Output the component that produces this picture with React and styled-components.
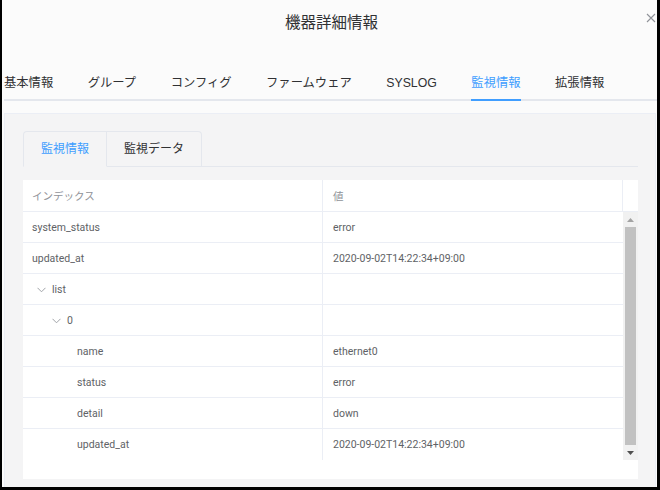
import React from 'react'
import styled, {createGlobalStyle} from 'styled-components'

const GlobalStyle = createGlobalStyle`
  html, body {
    margin: 0;
    padding: 0;
    background: #000;
  }
  body {
    font-family: Roboto, "Noto Sans CJK JP", sans-serif;
  }
  * {
    box-sizing: border-box;
  }
`

const tabs = ['基本情報', 'グループ', 'コンフィグ', 'ファームウェア', 'SYSLOG', '監視情報', '拡張情報']

const rows = [
    {key: 'system_status', value: 'error', indent: 9},
    {key: 'updated_at', value: '2020-09-02T14:22:34+09:00', indent: 9},
    {key: 'list', value: '', indent: 14, expand: true},
    {key: '0', value: '', indent: 29, expand: true},
    {key: 'name', value: 'ethernet0', indent: 54},
    {key: 'status', value: 'error', indent: 54},
    {key: 'detail', value: 'down', indent: 54},
    {key: 'updated_at', value: '2020-09-02T14:22:34+09:00', indent: 54},
]

export default function App() {
    return (
        <>
            <GlobalStyle/>
            <Modal>
                <Header>
                    <span/>
                    <Title>機器詳細情報</Title>
                    <Close>
                        <svg width="10" height="10" viewBox="0 0 10 10">
                            <path d="M1 1 L9 9 M9 1 L1 9" stroke="#909399" strokeWidth="1.1"/>
                        </svg>
                    </Close>
                </Header>
                <TabNav>
                    {tabs.map(t => (
                        <TabItem key={t} active={t === '監視情報'}>{t}</TabItem>
                    ))}
                </TabNav>
                <Panel>
                    <CardTabs>
                        <CardTab active>監視情報</CardTab>
                        <CardTab>監視データ</CardTab>
                    </CardTabs>
                    <Table>
                        <HeadRow>
                            <HeadCell>インデックス</HeadCell>
                            <HeadCell>値</HeadCell>
                            <Gutter/>
                        </HeadRow>
                        <Body>
                            <Rows>
                                {rows.map((r, i) => (
                                    <Row key={i} last={i === rows.length - 1}>
                                        <KeyCell style={{paddingLeft: r.indent}}>
                                            {r.expand && (
                                                <Chevron width="9" height="6" viewBox="0 0 9 6">
                                                    <path d="M0.5 0.8 L4.5 4.8 L8.5 0.8" fill="none" stroke="#a0a3a8" strokeWidth="1"/>
                                                </Chevron>
                                            )}
                                            {r.key}
                                        </KeyCell>
                                        <ValueCell>{r.value}</ValueCell>
                                    </Row>
                                ))}
                            </Rows>
                            <ScrollTrack>
                                <Arrow>
                                    <svg width="7" height="4" viewBox="0 0 7 4"><path d="M0 4 L3.5 0 L7 4 Z" fill="#a3a3a3"/></svg>
                                </Arrow>
                                <Thumb/>
                                <Arrow>
                                    <svg width="7" height="4" viewBox="0 0 7 4"><path d="M0 0 L3.5 4 L7 0 Z" fill="#505050"/></svg>
                                </Arrow>
                            </ScrollTrack>
                        </Body>
                        <TableFoot/>
                    </Table>
                </Panel>
            </Modal>
        </>
    )
}

const Modal = styled.div`
    width: 655px;
    height: 487px;
    margin-left: 2px;
    background-color: #fbfbfb;
    display: flex;
    flex-direction: column;
    padding-left: 2px;
    overflow: hidden;
`
const Header = styled.div`
    display: grid;
    grid-template-columns: 1fr auto 1fr;
    align-items: center;
    padding-top: 11px;
    height: 67px;
    align-content: start;
`
const Title = styled.div`
    font-size: 15.5px;
    line-height: 20px;
    color: #303133;
    font-family: "Noto Sans CJK JP", sans-serif;
    padding-left: 2px;
`
const Close = styled.div`
    justify-self: end;
    padding-right: 1px;
    margin-top: -6px;
    display: flex;
`
const TabNav = styled.div`
    display: flex;
    gap: 34.5px;
    box-shadow: inset 0 -2px 0 #e4e7ed;
`
const TabItem = styled.div`
    height: 34px;
    line-height: 32px;
    font-size: 12.3px;
    font-family: "Liberation Sans", "Noto Sans CJK JP", sans-serif;
    color: ${p => p.active ? '#409eff' : '#303133'};
    border-bottom: 2px solid ${p => p.active ? '#409eff' : 'transparent'};
    white-space: nowrap;
`
const Panel = styled.div`
    flex: 1;
    margin-top: 12px;
    margin-right: 1px;
    background-color: #f4f4f5;
    border: 1px solid #ebeef5;
    border-bottom: none;
    padding: 17px 17px 0 18px;
    display: flex;
    flex-direction: column;
`
const CardTabs = styled.div`
    display: flex;
    height: 36px;
    border-bottom: 1px solid #e4e7ed;
    margin-bottom: 13px;
`
const CardTab = styled.div`
    height: 36px;
    padding: 0 17px;
    line-height: 35px;
    font-size: 12px;
    white-space: nowrap;
    color: ${p => p.active ? '#409eff' : '#303133'};
    border: 1px solid #e4e7ed;
    border-bottom: 1px solid ${p => p.active ? '#f4f4f5' : '#e4e7ed'};
    border-left: ${p => p.active ? '1px solid #e4e7ed' : 'none'};
    border-radius: ${p => p.active ? '4px 0 0 0' : '0 4px 0 0'};
    background-color: #f4f4f5;
`
const Table = styled.div`
    background-color: #fff;
    width: 615px;
    display: flex;
    flex-direction: column;
`
const HeadRow = styled.div`
    display: grid;
    grid-template-columns: 300px 300px 15px;
    height: 32px;
    border-bottom: 1px solid #ebeef5;
`
const HeadCell = styled.div`
    font-size: 10.5px;
    color: #909399;
    padding-left: 9px;
    display: flex;
    align-items: center;
    border-right: 1px solid #ebeef5;
    &:nth-child(2) {
        padding-left: 10px;
    }
`
const Gutter = styled.div``
const Body = styled.div`
    display: flex;
    height: 248px;
`
const Rows = styled.div`
    width: 600px;
    display: flex;
    flex-direction: column;
`
const Row = styled.div`
    display: grid;
    grid-template-columns: 300px 300px;
    height: 31px;
    flex-shrink: 0;
    border-bottom: ${p => p.last ? 'none' : '1px solid #ebeef5'};
`
const KeyCell = styled.div`
    font-size: 10.5px;
    color: #606266;
    display: flex;
    align-items: center;
    border-right: 1px solid #ebeef5;
`
const ValueCell = styled.div`
    font-size: 10.5px;
    color: #606266;
    display: flex;
    align-items: center;
    padding-left: 10px;
`
const Chevron = styled.svg`
    margin-right: 6px;
    margin-top: 1px;
`
const ScrollTrack = styled.div`
    width: 15px;
    background-color: #f1f1f1;
    display: flex;
    flex-direction: column;
    align-items: center;
`
const Arrow = styled.div`
    height: 15px;
    display: flex;
    align-items: center;
    justify-content: center;
`
const Thumb = styled.div`
    flex: 1;
    width: 11px;
    background-color: #c1c1c1;
`
const TableFoot = styled.div`
    height: 19px;
`
